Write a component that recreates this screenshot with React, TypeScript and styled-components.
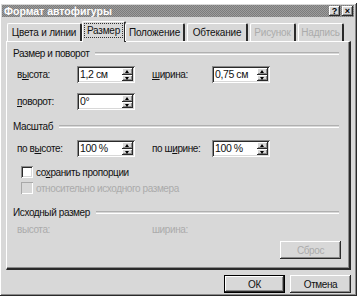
import React from 'react';
import styled, { createGlobalStyle, css } from 'styled-components';

// --- Colours of the classic 3D look (grayscale screenshot) --- //
const face = '#d8d8d8';
const shadow = '#8a8a8a';
const dark = '#2a2a2a';
const light = '#ffffff';
const disabledText = '#ababab';

const GlobalStyle = createGlobalStyle`
  html, body {
    margin: 0;
    padding: 0;
    background: #ffffff;
  }
  body {
    font-family: "Liberation Sans", Arial, sans-serif;
    font-size: 10px;
    letter-spacing: -0.4px;
    color: #111;
  }
`;

const raised = css`
  box-shadow: inset -1px -1px ${dark}, inset 1px 1px ${light},
    inset -2px -2px ${shadow}, inset 2px 2px ${face};
`;

const sunken = css`
  box-shadow: inset 1px 1px ${shadow}, inset -1px -1px ${light},
    inset 2px 2px ${dark}, inset -2px -2px ${face};
`;

// --- Window frame --- //
const Screen = styled.div`
  width: 358px;
  height: 302px;
  padding-top: 3px;
  box-sizing: border-box;
`;

const Dialog = styled.div`
  ${raised}
  background: ${face};
  width: 357px;
  height: 293px;
  box-sizing: border-box;
  padding: 2px 3px 3px 2px;
  display: flex;
  flex-direction: column;
`;

const TitleBar = styled.div`
  height: 13px;
  background-color: #8c8c8c;
  background-image: repeating-conic-gradient(#7c7c7c 0 25%, #9c9c9c 0 50%);
  background-size: 2px 2px;
  display: flex;
  align-items: center;
  justify-content: space-between;
  padding: 0 1px 0 2px;
`;

const Title = styled.span`
  color: #ffffff;
  font-weight: bold;
  font-size: 10.5px;
  letter-spacing: 0;
`;

const TitleButtons = styled.div`
  display: flex;
  gap: 2px;
`;

const TitleButton = styled.div`
  ${raised}
  background: ${face};
  width: 11px;
  height: 10px;
  box-sizing: border-box;
  font-size: 9px;
  font-weight: bold;
  line-height: 10px;
  text-align: center;
  letter-spacing: 0;
  color: #000;
`;

// --- Tabs --- //
const Body = styled.div`
  padding: 3px 0 0 4px;
  display: flex;
  flex-direction: column;
  flex: 1;
`;

const TabRow = styled.div`
  display: flex;
  align-items: flex-end;
  height: 21px;
  padding-left: 1px;
  position: relative;
  z-index: 1;
`;

const Tab = styled.div<{ $w: number; $active?: boolean; $disabled?: boolean }>`
  width: ${(p) => p.$w}px;
  height: ${(p) => (p.$active ? 21 : 18)}px;
  margin: ${(p) => (p.$active ? '0 -1px -1px -2px' : '0 2px 0 0')};
  background: ${face};
  border-top: 1px solid ${light};
  border-left: 1px solid ${light};
  border-right: 2px solid ${dark};
  border-radius: 2px 2px 0 0;
  box-sizing: border-box;
  display: flex;
  align-items: center;
  justify-content: center;
  white-space: nowrap;
  letter-spacing: -0.2px;
  color: ${(p) => (p.$disabled ? disabledText : '#111')};
  padding-bottom: ${(p) => (p.$active ? 3 : 0)}px;
`;

const Focus = styled.span`
  outline: 1px dotted #333;
  outline-offset: 1px;
  padding: 0 1px;
`;

const Panel = styled.div`
  border-top: 1px solid ${light};
  border-left: 1px solid ${light};
  border-right: 2px solid ${dark};
  border-bottom: 2px solid ${dark};
  box-shadow: inset -1px -1px ${shadow};
  width: 345px;
  height: 229px;
  box-sizing: border-box;
  padding: 4px 10px 0 6px;
  display: flex;
  flex-direction: column;
`;

// --- Panel contents --- //
const GroupHeader = styled.div<{ $top: number }>`
  display: flex;
  align-items: center;
  gap: 6px;
  margin-top: ${(p) => p.$top}px;
  height: 14px;

  &::after {
    content: '';
    flex: 1;
    height: 1px;
    border-top: 1px solid #b0b0b0;
    border-bottom: 1px solid ${light};
  }
`;

const Row = styled.div<{ $top: number }>`
  display: flex;
  align-items: center;
  height: 17px;
  margin-top: ${(p) => p.$top}px;
  padding-left: 4px;
`;

const Label = styled.span<{ $w: number; $disabled?: boolean }>`
  width: ${(p) => p.$w}px;
  flex: none;
  color: ${(p) => (p.$disabled ? disabledText : '#111')};
`;

const Key = styled.span`
  text-decoration: underline;
  text-underline-offset: 1px;
`;

const SpinBox = styled.div<{ $gap?: number }>`
  ${sunken}
  background: #ffffff;
  width: 58px;
  height: 17px;
  box-sizing: border-box;
  padding: 2px;
  display: flex;
  flex: none;
  margin-right: ${(p) => p.$gap ?? 0}px;
`;

const SpinValue = styled.span`
  flex: 1;
  padding-left: 1px;
  line-height: 13px;
  font-size: 10.5px;
`;

const SpinButtons = styled.div`
  width: 11px;
  display: flex;
  flex-direction: column;
`;

const SpinButton = styled.div<{ $down?: boolean }>`
  ${raised}
  background: ${face};
  flex: 1;
  position: relative;

  &::after {
    content: '';
    position: absolute;
    left: 3px;
    top: 2px;
    border-left: 2.5px solid transparent;
    border-right: 2.5px solid transparent;
    ${(p) =>
      p.$down
        ? `border-top: 3px solid #000;`
        : `border-bottom: 3px solid #000;`}
  }
`;

const CheckRow = styled.div<{ $top: number; $disabled?: boolean }>`
  display: flex;
  align-items: center;
  gap: 3px;
  margin-top: ${(p) => p.$top}px;
  padding-left: 8px;
  height: 14px;
  color: ${(p) => (p.$disabled ? disabledText : '#111')};
`;

const Box = styled.span<{ $disabled?: boolean }>`
  ${(p) =>
    p.$disabled
      ? css`
          box-shadow: inset 1px 1px #a8a8a8, inset -1px -1px ${light};
        `
      : sunken}
  width: 12px;
  height: 12px;
  flex: none;
  background: ${(p) => (p.$disabled ? face : '#ffffff')};
`;

const ResetRow = styled.div`
  display: flex;
  justify-content: flex-end;
  margin-top: 3px;
  margin-right: -2px;
`;

const Button = styled.div<{ $default?: boolean; $disabled?: boolean }>`
  width: 61px;
  height: 18px;
  box-sizing: border-box;
  background: ${face};
  display: flex;
  align-items: center;
  justify-content: center;
  color: ${(p) => (p.$disabled ? disabledText : '#111')};
  ${(p) =>
    p.$default
      ? css`
          border: 1px solid #000;
          box-shadow: inset -1px -1px ${dark}, inset 1px 1px ${light},
            inset -2px -2px ${shadow};
        `
      : raised}
`;

const Footer = styled.div`
  display: flex;
  justify-content: flex-end;
  gap: 5px;
  padding: 5px 0 0 0;
  width: 345px;
`;

function Spin({ value, gap }: { value: string; gap?: number }) {
  return (
    <SpinBox $gap={gap}>
      <SpinValue>{value}</SpinValue>
      <SpinButtons>
        <SpinButton />
        <SpinButton $down />
      </SpinButtons>
    </SpinBox>
  );
}

export default function App() {
  return (
    <Screen>
      <GlobalStyle />
      <Dialog>
        <TitleBar>
          <Title>Формат автофигуры</Title>
          <TitleButtons>
            <TitleButton>?</TitleButton>
            <TitleButton>×</TitleButton>
          </TitleButtons>
        </TitleBar>
        <Body>
          <TabRow>
            <Tab $w={75}>Цвета и линии</Tab>
            <Tab $w={44} $active>
              <Focus>Размер</Focus>
            </Tab>
            <Tab $w={60}>Положение</Tab>
            <Tab $w={61}>Обтекание</Tab>
            <Tab $w={46} $disabled>
              Рисунок
            </Tab>
            <Tab $w={46} $disabled>
              Надпись
            </Tab>
          </TabRow>
          <Panel>
            <GroupHeader $top={0}>Размер и поворот</GroupHeader>
            <Row $top={6}>
              <Label $w={60}>
                в<Key>ы</Key>сота:
              </Label>
              <Spin value="1,2 см" gap={17} />
              <Label $w={60}>
                <Key>ш</Key>ирина:
              </Label>
              <Spin value="0,75 см" />
            </Row>
            <Row $top={10}>
              <Label $w={60}>
                <Key>п</Key>оворот:
              </Label>
              <Spin value="0°" />
            </Row>
            <GroupHeader $top={9}>Масштаб</GroupHeader>
            <Row $top={7}>
              <Label $w={60}>
                по в<Key>ы</Key>соте:
              </Label>
              <Spin value="100 %" gap={17} />
              <Label $w={60}>
                по ш<Key>и</Key>рине:
              </Label>
              <Spin value="100 %" />
            </Row>
            <CheckRow $top={8}>
              <Box />
              <span>
                со<Key>х</Key>ранить пропорции
              </span>
            </CheckRow>
            <CheckRow $top={2} $disabled>
              <Box $disabled />
              <span>относительно исходного размера</span>
            </CheckRow>
            <GroupHeader $top={10}>Исходный размер</GroupHeader>
            <Row $top={2}>
              <Label $w={135} $disabled>
                высота:
              </Label>
              <Label $w={60} $disabled>
                ширина:
              </Label>
            </Row>
            <ResetRow>
              <Button $disabled>Сброс</Button>
            </ResetRow>
          </Panel>
          <Footer>
            <Button $default>ОК</Button>
            <Button>Отмена</Button>
          </Footer>
        </Body>
      </Dialog>
    </Screen>
  );
}
